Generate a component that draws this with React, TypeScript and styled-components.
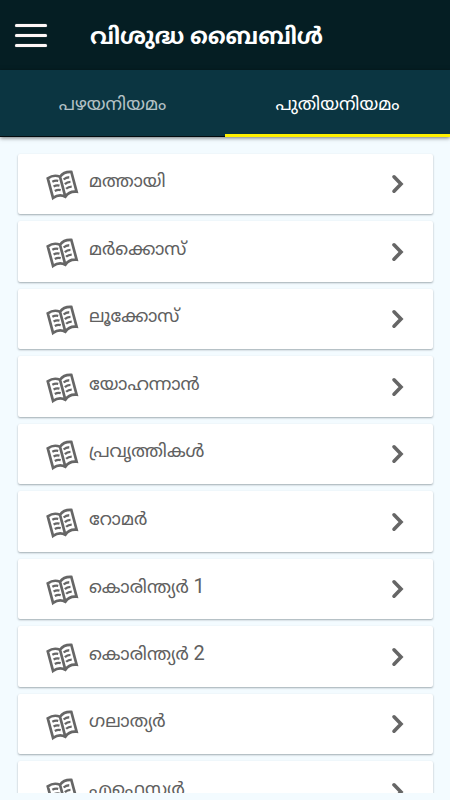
import React from 'react';
import styled, { createGlobalStyle } from 'styled-components';

const GlobalStyle = createGlobalStyle`
  * { box-sizing: border-box; }
  body { margin: 0; background: #f3fbff; font-family: Roboto, "Noto Sans Malayalam", "Noto Sans", sans-serif; }
`;

const Screen = styled.div`
  width: 450px;
  height: 800px;
  display: flex;
  flex-direction: column;
  overflow: hidden;
  background: #f3fbff;
`;

const Toolbar = styled.header`
  height: 70px;
  flex: none;
  display: flex;
  align-items: center;
  gap: 43px;
  padding-left: 15px;
  background: #051e23;
`;

const MenuButton = styled.button`
  width: 32px;
  height: 23px;
  display: flex;
  flex-direction: column;
  justify-content: space-between;
  margin-top: 1px;
  padding: 0;
  border: 0;
  background: none;
`;

const MenuBar = styled.span`
  height: 3px;
  border-radius: 1.5px;
  background: #fff8f8;
  box-shadow: 0 0 1px rgba(255, 248, 248, 0.6);
`;

const Title = styled.h1`
  margin: 3px 0 0;
  color: #fff;
  font-size: 22.6px;
  font-weight: 700;
  line-height: 36px;
  white-space: nowrap;
`;

const Tabs = styled.nav`
  height: 67px;
  flex: none;
  display: grid;
  grid-template-columns: 1fr 1fr;
  background: #0b3541;
  box-shadow: 0 1px 4px rgba(0, 0, 0, 0.55);
`;

const Tab = styled.button<{ $active?: boolean }>`
  padding: 0;
  border: 0;
  border-bottom: ${({ $active }) => ($active ? '3px solid #fff000' : '1px solid #020b0e')};
  padding-top: ${({ $active }) => ($active ? '3px' : '1px')};
  background: none;
  color: ${({ $active }) => ($active ? '#ffffff' : '#b4c1c5')};
  font-family: inherit;
  font-size: 18.1px;
  line-height: 28px;
`;

const List = styled.ul`
  height: 656px;
  flex: none;
  display: flex;
  flex-direction: column;
  gap: 7px;
  margin: 0;
  padding: 16.5px 17.5px 0;
  overflow: hidden;
  list-style: none;
`;

const Card = styled.li`
  height: 60.5px;
  flex: none;
  display: flex;
  align-items: center;
  padding: 0 27px 0 27px;
  border-radius: 2px;
  background: #fff;
  box-shadow: 0 1px 2px rgba(0, 20, 30, 0.34);
`;

const Name = styled.span`
  flex: 1;
  padding: 0 0 5px 10.5px;
  color: #606060;
  font-size: 18px;
  line-height: 28px;
  white-space: nowrap;
`;

const Volume = styled.span`
  font-size: 20px;
`;

const BookSvg = styled.svg`
  width: 34px;
  height: 34px;
  flex: none;
  margin-top: 3px;
`;

const ChevronSvg = styled.svg`
  width: 16px;
  height: 22px;
  flex: none;
  margin-top: 1px;
`;

function BookIcon() {
  return (
    <BookSvg viewBox="0 0 34 34" fill="none" stroke="#666" strokeLinejoin="miter">
      <g transform="rotate(-15 17 17)">
        <path strokeWidth="2.7" d="M17.2 8.6C13.8 5.8 9.2 5.4 5 6.8V27.2C9.2 25.6 13.8 26 17.2 29.2C20.6 26 25.2 25.6 29.4 27.2V6.8C25.2 5.4 20.6 5.8 17.2 8.6V28" />
        <path strokeWidth="2.3" d="M8.5 11.4C10.8 10.8 12.6 11 14.4 12.1M8.5 16.2C10.8 15.6 12.6 15.8 14.4 16.9M8.5 21C10.8 20.4 12.6 20.6 14.4 21.7M20 12.1C22 11 23.8 10.8 26 11.4M20 16.9C22 15.8 23.8 15.6 26 16.2M20 21.7C22 20.6 23.8 20.4 26 21" />
      </g>
    </BookSvg>
  );
}

function ChevronIcon() {
  return (
    <ChevronSvg viewBox="0 0 16 22" fill="none" stroke="#666" strokeWidth="3.6" strokeLinecap="round">
      <path d="M4 3.8L11 11L4 18.2" />
    </ChevronSvg>
  );
}

const books: { name: string; volume?: number }[] = [
  { name: 'മത്തായി' },
  { name: 'മർക്കൊസ്' },
  { name: 'ലൂക്കോസ്' },
  { name: 'യോഹന്നാൻ' },
  { name: 'പ്രവൃത്തികൾ' },
  { name: 'റോമർ' },
  { name: 'കൊരിന്ത്യർ', volume: 1 },
  { name: 'കൊരിന്ത്യർ', volume: 2 },
  { name: 'ഗലാത്യർ' },
  { name: 'എഫെസ്യർ' },
];

export default function App() {
  return (
    <Screen>
      <GlobalStyle />
      <Toolbar>
        <MenuButton aria-label="Menu">
          <MenuBar />
          <MenuBar />
          <MenuBar />
        </MenuButton>
        <Title>വിശുദ്ധ ബൈബിൾ</Title>
      </Toolbar>
      <Tabs>
        <Tab>പഴയനിയമം</Tab>
        <Tab $active>പുതിയനിയമം</Tab>
      </Tabs>
      <List>
        {books.map(({ name, volume }, index) => (
          <Card key={index}>
            <BookIcon />
            <Name>
              {name}
              {volume && <Volume> {volume}</Volume>}
            </Name>
            <ChevronIcon />
          </Card>
        ))}
      </List>
    </Screen>
  );
}
